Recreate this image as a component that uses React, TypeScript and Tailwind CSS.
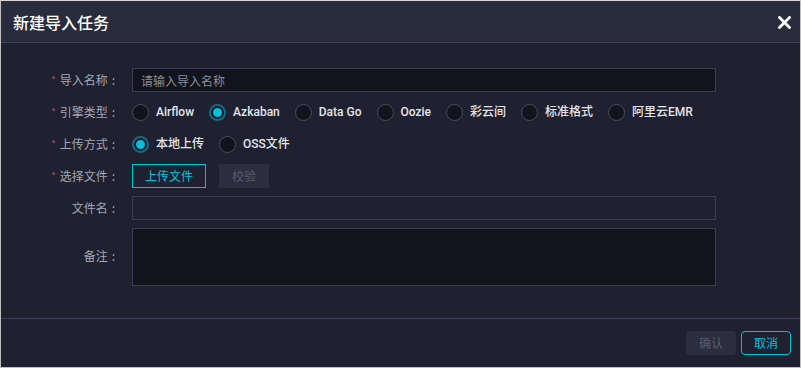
import { useState } from 'react'

const FONT = { fontFamily: '"Noto Sans CJK SC", "Noto Sans", sans-serif' }
const RADIO_FONT = { fontFamily: 'Roboto, "Noto Sans CJK SC", sans-serif' }

const engines = ['Airflow', 'Azkaban', 'Data Go', 'Oozie', '彩云间', '标准格式', '阿里云EMR']
const uploads = ['本地上传', 'OSS文件']

function Radio({ checked, label, onClick }: { checked: boolean; label: string; onClick: () => void }) {
  return (
    <button type="button" onClick={onClick} className="flex items-center gap-[7px] mr-[15px] shrink-0">
      {checked ? (
        <span className="w-[17px] h-[17px] rounded-full border-2 border-[#0f6f82] bg-[#12141d] flex items-center justify-center shrink-0">
          <span className="w-[9px] h-[9px] rounded-full bg-[#00c1de]" />
        </span>
      ) : (
        <span className="w-[17px] h-[17px] rounded-full border border-[#4a4c5e] bg-[#12141d] shrink-0" />
      )}
      <span className="text-xs font-medium text-[#e4e5ea] whitespace-nowrap" style={RADIO_FONT}>{label}</span>
    </button>
  )
}

function Label({ text, required }: { text: string; required?: boolean }) {
  return (
    <div className="w-[131px] shrink-0 flex items-center justify-end pr-[17px] text-xs text-[#a3a6b4] whitespace-nowrap">
      {required && <span className="text-[#e0383e] mr-1 text-[10px]">*</span>}
      <span>{text}</span>
      <span className="ml-1">:</span>
    </div>
  )
}

export default function App() {
  const [engine, setEngine] = useState('Azkaban')
  const [upload, setUpload] = useState('本地上传')

  return (
    <div className="w-[801px] h-[368px] bg-[#1f2130] border border-[#bfbfbf] border-t-[#d9d9d9] flex flex-col" style={FONT}>
      <div className="h-[42px] shrink-0 bg-[#292c3d] border-b border-[#3f4257] flex items-center justify-between pl-3 pr-[9px]">
        <span className="text-base font-medium text-white">新建导入任务</span>
        <svg width="13" height="13" viewBox="0 0 13 13" className="mt-px">
          <path d="M1.5 1.5 L11.5 11.5 M11.5 1.5 L1.5 11.5" stroke="#ffffff" strokeWidth="2.8" strokeLinecap="square" />
        </svg>
      </div>

      <div className="flex-1 flex flex-col pt-[25px] pr-[84px]">
        <div className="flex h-[24px]">
          <Label text="导入名称" required />
          <input
            placeholder="请输入导入名称"
            className="flex-1 h-[24px] bg-[#12141d] border border-[#3b3d52] px-2 text-xs text-white placeholder:text-[#8a8d9a] outline-none"
          />
        </div>

        <div className="flex h-[24px] mt-[8px]">
          <Label text="引擎类型" required />
          <div className="flex items-center">
            {engines.map(e => (
              <Radio key={e} label={e} checked={engine === e} onClick={() => setEngine(e)} />
            ))}
          </div>
        </div>

        <div className="flex h-[24px] mt-[8px]">
          <Label text="上传方式" required />
          <div className="flex items-center">
            {uploads.map(u => (
              <Radio key={u} label={u} checked={upload === u} onClick={() => setUpload(u)} />
            ))}
          </div>
        </div>

        <div className="flex h-[24px] mt-[8px]">
          <Label text="选择文件" required />
          <div className="flex items-center gap-[13px]">
            <button type="button" className="w-[74px] h-[24px] border border-[#00c1de] text-[#00c1de] text-xs">上传文件</button>
            <button type="button" className="w-[50px] h-[24px] bg-[#2b2e3f] text-[#5a5d6e] text-xs">校验</button>
          </div>
        </div>

        <div className="flex h-[24px] mt-[8px]">
          <Label text="文件名" />
          <div className="flex-1 h-[24px] bg-[#1f2130] border border-[#3b3d52]" />
        </div>

        <div className="flex mt-[8px]">
          <div className="w-[131px] shrink-0 flex justify-end pr-[17px] text-xs text-[#a3a6b4] pt-[20px]">
            <span>备注</span>
            <span className="ml-1">:</span>
          </div>
          <textarea className="flex-1 h-[58px] bg-[#12141d] border border-[#3b3d52] resize-none outline-none" />
        </div>
      </div>

      <div className="h-[49px] shrink-0 border-t border-[#3f4257] flex items-start justify-end gap-[5px] pt-[12px] pr-[9px]">
        <button type="button" className="w-[50px] h-[24px] bg-[#2b2e3f] text-[#5a5d6e] text-xs rounded-sm">确认</button>
        <button type="button" className="w-[50px] h-[24px] border border-[#00c1de] text-[#00c1de] text-xs rounded-sm">取消</button>
      </div>
    </div>
  )
}
